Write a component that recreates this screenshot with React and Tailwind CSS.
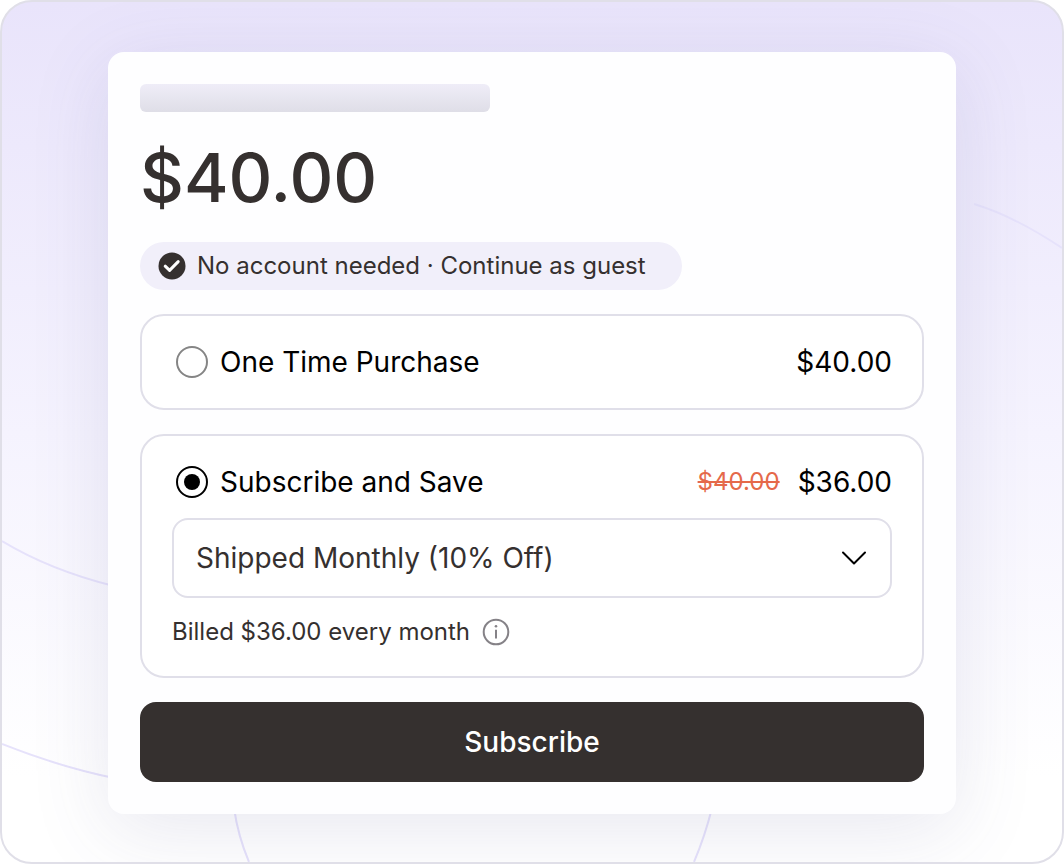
import { useState } from 'react'

function Rings() {
  return (
    <svg
      className="absolute inset-0 h-full w-full pointer-events-none"
      viewBox="0 0 1060 860"
      preserveAspectRatio="xMidYMid slice"
      fill="none"
      stroke="#e6e2fb"
      strokeWidth="2"
      aria-hidden="true"
    >
      <path d="M0 539Q48 568 112 584" />
      <path d="M0 742Q58 765 112 776" />
      <path d="M972 202Q1012 214 1060 246" />
      <path d="M232 806Q236 834 247 860" />
      <path d="M710 806Q703 834 692 860" />
    </svg>
  )
}

function CheckBadge() {
  return (
    <svg className="h-7 w-7 shrink-0" viewBox="0 0 28 28" fill="none" aria-hidden="true">
      <circle cx="14" cy="14" r="13.5" fill="#35302f" />
      <path d="M7.2 14.2l4.4 4.2 8.6-8.8" stroke="#fff" strokeWidth="3" strokeLinecap="round" strokeLinejoin="round" />
    </svg>
  )
}

function InfoIcon() {
  return (
    <svg className="h-7 w-7" viewBox="0 0 28 28" fill="none" stroke="#858287" strokeWidth="2" aria-hidden="true">
      <circle cx="14" cy="14" r="12.3" />
      <path d="M14 11.8v8.6" />
      <circle cx="14" cy="8.3" r="1.3" fill="#858287" stroke="none" />
    </svg>
  )
}

function PlanRadio({ label, value, plan, onSelect }) {
  return (
    <label className="flex items-center gap-3 pl-1 cursor-pointer">
      <input
        type="radio"
        name="plan"
        value={value}
        checked={plan === value}
        onChange={() => onSelect(value)}
        className="appearance-none grid place-content-center h-8 w-8 rounded-full border-2 border-[#858585] bg-white checked:border-black before:h-4 before:w-4 before:rounded-full checked:before:bg-black"
      />
      {label}
    </label>
  )
}

export default function App() {
  const [plan, setPlan] = useState('subscribe')
  const [interval, setInterval] = useState('monthly')

  return (
    <div className="relative min-h-dvh overflow-hidden rounded-[32px] border-2 border-[#e0dfe8] bg-linear-to-b from-[#e9e4fb] via-[#f5f3fe] via-50% to-white to-90% pt-[50px] pb-12 font-['Inter',sans-serif] text-[28px] leading-8 text-black">
      <Rings />

      <main className="relative mx-auto w-4/5 rounded-2xl bg-[#fefeff] p-8 shadow-[0_16px_80px_rgba(80,75,140,0.13)]">
        {/* Product title placeholder */}
        <div className="h-7 max-w-[350px] rounded-md bg-linear-to-b from-[#efedf8] to-[#dfdee7]" />

        <p className="my-7 text-[68px] leading-[74px] font-medium text-[#35302f]">$40.00</p>

        <div className="flex h-12 w-fit items-center gap-[11px] rounded-full bg-[#f1effa] pr-9 pl-[18px] text-2xl text-[#35302f]">
          <CheckBadge />
          No account needed · Continue as guest
        </div>

        <form className="mt-6 flex flex-col gap-6" onSubmit={e => e.preventDefault()}>
          <div className="flex items-center justify-between rounded-3xl border-2 border-[#e0dfe9] bg-white p-[30px]">
            <PlanRadio label="One Time Purchase" value="once" plan={plan} onSelect={setPlan} />
            <span>$40.00</span>
          </div>

          <div className="flex flex-col gap-5 rounded-3xl border-2 border-[#e0dfe9] bg-white p-[30px]">
            <div className="flex items-center justify-between">
              <PlanRadio label="Subscribe and Save" value="subscribe" plan={plan} onSelect={setPlan} />
              <div className="flex items-center gap-[18px]">
                <s className="text-2xl leading-8 text-[#e5694a] decoration-2">$40.00</s>
                <span>$36.00</span>
              </div>
            </div>

            <div className="relative">
              <select
                aria-label="Shipping interval"
                value={interval}
                onChange={e => setInterval(e.target.value)}
                className="h-20 w-full appearance-none rounded-2xl border-2 border-[#e0dfe9] bg-white pr-16 pl-[22px] text-[#35302f]"
              >
                <option value="monthly">Shipped Monthly (10% Off)</option>
              </select>
              <svg
                className="absolute top-1/2 right-6 h-7 w-7 -translate-y-1/2 pointer-events-none"
                viewBox="0 0 28 28"
                fill="none"
                stroke="#000"
                strokeWidth="2"
                strokeLinecap="round"
                strokeLinejoin="round"
                aria-hidden="true"
              >
                <path d="M3 8.5L14 19.5L25 8.5" />
              </svg>
            </div>

            <div className="flex items-center gap-3 text-2xl leading-7 text-[#35302f]">
              Billed $36.00 every month
              <button type="button" aria-label="Billing details">
                <InfoIcon />
              </button>
            </div>
          </div>

          <button type="submit" className="h-20 rounded-2xl bg-[#35302f] font-medium text-white">
            Subscribe
          </button>
        </form>
      </main>
    </div>
  )
}
